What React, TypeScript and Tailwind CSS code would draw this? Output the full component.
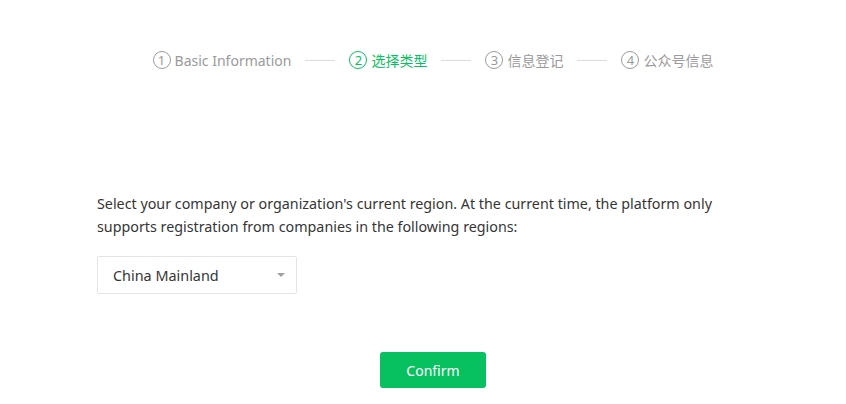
import React from "react";

const font = { fontFamily: '"Noto Sans", "Noto Sans CJK SC", sans-serif' };

function Step({ n, label, active }: { n: number; label: string; active?: boolean }) {
  const color = active ? "text-[#07c160] border-[#07c160]" : "text-[#9a9a9a] border-[#9a9a9a]";
  return (
    <div className={`flex items-center ${active ? "text-[#07c160]" : "text-[#9a9a9a]"}`}>
      <span
        className={`flex items-center justify-center w-[18px] h-[18px] rounded-full border ${color} text-[13px] leading-none`}
      >
        {n}
      </span>
      <span className="ml-[4px] text-[14px]">{label}</span>
    </div>
  );
}

function Line() {
  return <div className="w-[30px] h-px bg-[#dcdcdc] mx-[14px]" />;
}

export default function App() {
  return (
    <div className="w-[846px] h-[404px] bg-white pl-[20px]" style={font}>
      <div className="w-[672px] mx-auto">
        <div className="flex items-center justify-center pt-[50px] h-[70px]">
          <Step n={1} label="Basic Information" />
          <Line />
          <Step n={2} label="选择类型" active />
          <Line />
          <Step n={3} label="信息登记" />
          <Line />
          <Step n={4} label="公众号信息" />
        </div>
        <p className="mt-[122px] text-[14.3px] leading-[23px] text-[#353535]">
          Select your company or organization's current region. At the current time, the platform only
          supports registration from companies in the following regions:
        </p>
        <div className="mt-[18px] w-[200px] h-[38px] border border-[#e4e4e4] rounded-[2px] flex items-center justify-between pl-[15px] pr-[11px]">
          <span className="text-[14.4px] text-[#353535] pt-[2px]">China Mainland</span>
          <span className="w-0 h-0 border-l-[4px] border-r-[4px] border-t-[4px] border-l-transparent border-r-transparent border-t-[#a0a0a0]" />
        </div>
        <div className="flex justify-center mt-[58px]">
          <button className="w-[106px] h-[36px] rounded-[3px] bg-[#07c160] text-white text-[14px]">
            Confirm
          </button>
        </div>
      </div>
    </div>
  );
}
